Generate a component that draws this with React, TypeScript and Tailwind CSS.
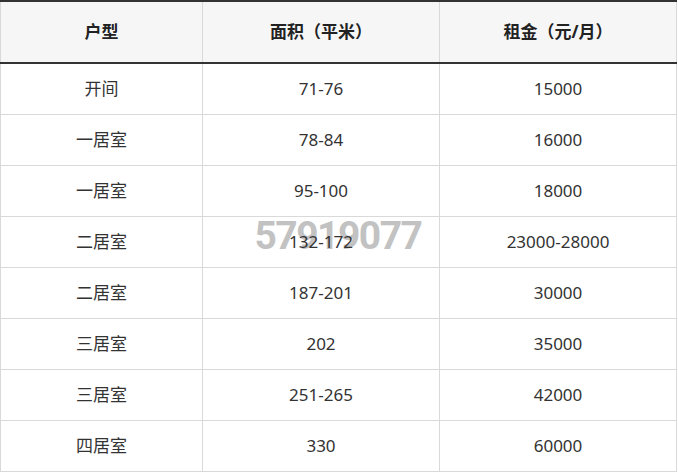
const rows: [string, string, string][] = [
  ["开间", "71-76", "15000"],
  ["一居室", "78-84", "16000"],
  ["一居室", "95-100", "18000"],
  ["二居室", "132-172", "23000-28000"],
  ["二居室", "187-201", "30000"],
  ["三居室", "202", "35000"],
  ["三居室", "251-265", "42000"],
  ["四居室", "330", "60000"],
];

export default function App() {
  return (
    <div className="relative w-[676px] bg-white font-['Noto_Sans','Noto_Sans_CJK_SC',sans-serif]">
      {/* watermark, sits under the table text */}
      <div className="pointer-events-none absolute left-0 right-0 top-[212px] z-0 text-center font-['Roboto',sans-serif] text-[39px] font-bold leading-[48px] tracking-[-1.5px] text-[#c2c2c2]">
        57919077
      </div>
      <table className="relative z-10 w-full table-fixed border-collapse text-center">
        <colgroup>
          <col className="w-[202px]" />
          <col className="w-[237px]" />
          <col className="w-[237px]" />
        </colgroup>
        <thead>
          <tr className="h-[62px] bg-[#f6f6f6] border-t-2 border-b-2 border-[#333]">
            <th className="border-x border-[#d9d9d9] text-[17px] font-bold text-[#222]">户型</th>
            <th className="border-x border-[#d9d9d9] text-[17px] font-bold text-[#222]">面积（平米）</th>
            <th className="border-x border-[#d9d9d9] text-[17px] font-bold text-[#222]">租金（元/月）</th>
          </tr>
        </thead>
        <tbody>
          {rows.map((r, i) => (
            <tr key={i} className="h-[51px]">
              {r.map((c, j) => (
                <td
                  key={j}
                  className="border border-[#d9d9d9] text-[17px] text-[#333]"
                >
                  {c}
                </td>
              ))}
            </tr>
          ))}
        </tbody>
      </table>
    </div>
  );
}
